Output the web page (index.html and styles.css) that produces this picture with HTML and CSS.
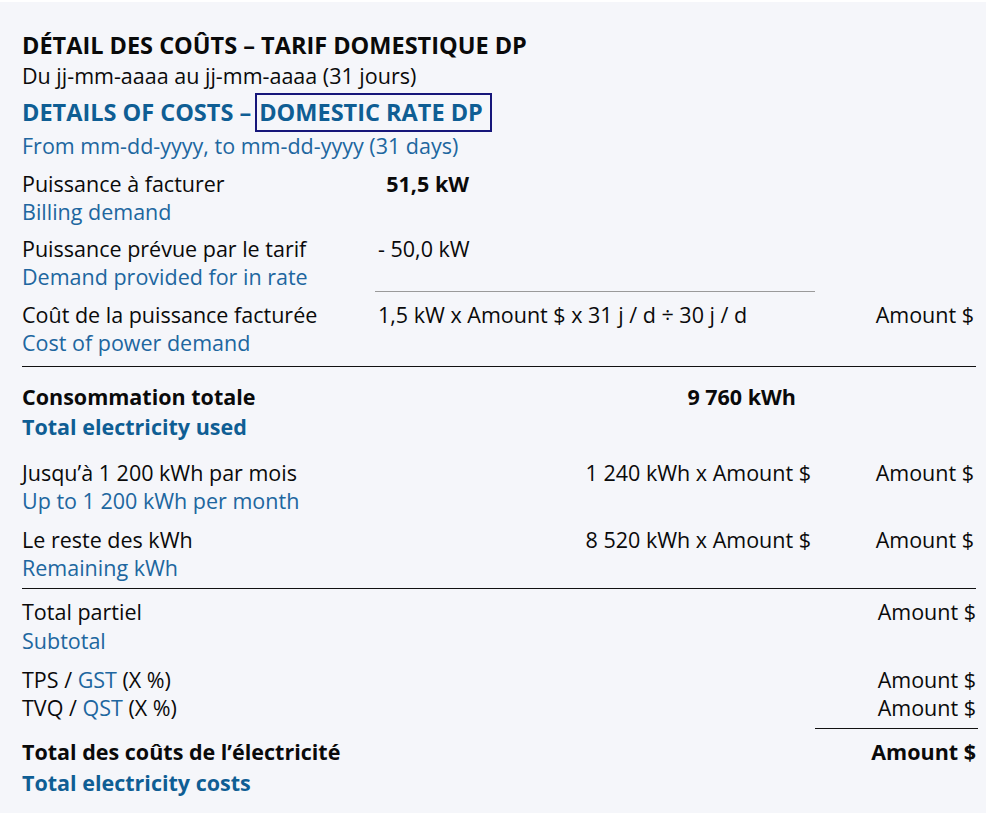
FILE: index.html
```html
<!DOCTYPE html>
<html lang="fr">
<head>
<meta charset="utf-8">
<title>Détail des coûts</title>
<link rel="stylesheet" href="styles.css">
</head>
<body>
<div class="page">
  <header class="head">
    <h1 class="title">DÉTAIL DES COÛTS – TARIF DOMESTIQUE DP</h1>
    <p class="sub">Du jj-mm-aaaa au jj-mm-aaaa (31 jours)</p>
    <h2 class="title-en">DETAILS OF COSTS –<span class="boxed">DOMESTIC RATE DP</span></h2>
    <p class="sub en">From mm-dd-yyyy, to mm-dd-yyyy (31 days)</p>
  </header>

  <section class="block power">
    <div class="row r1">
      <div class="label"><div>Puissance à facturer</div><div class="en">Billing demand</div></div>
      <div class="mid"><span class="qty bold">51,5 kW</span></div>
      <div class="amt"></div>
    </div>
    <div class="row r2">
      <div class="label"><div>Puissance prévue par le tarif</div><div class="en">Demand provided for in rate</div></div>
      <div class="mid rule"><span class="qty">- 50,0 kW</span></div>
      <div class="amt"></div>
    </div>
    <div class="row r3">
      <div class="label"><div>Coût de la puissance facturée</div><div class="en">Cost of power demand</div></div>
      <div class="mid"><span class="formula">1,5 kW x Amount $ x 31 j / d ÷ 30 j / d</span></div>
      <div class="amt">Amount $</div>
    </div>
  </section>

  <section class="block energy">
    <div class="row r4">
      <div class="label bold"><div>Consommation totale</div><div class="en">Total electricity used</div></div>
      <div class="mid right"><span class="bold total-kwh">9 760 kWh</span></div>
      <div class="amt"></div>
    </div>
    <div class="row r5">
      <div class="label"><div>Jusqu’à 1 200 kWh par mois</div><div class="en">Up to 1 200 kWh per month</div></div>
      <div class="mid right"><span class="calc">1 240 kWh x Amount $</span></div>
      <div class="amt">Amount $</div>
    </div>
    <div class="row r6">
      <div class="label"><div>Le reste des kWh</div><div class="en">Remaining kWh</div></div>
      <div class="mid right"><span class="calc">8 520 kWh x Amount $</span></div>
      <div class="amt">Amount $</div>
    </div>
  </section>

  <section class="block totals">
    <div class="row r7">
      <div class="label"><div>Total partiel</div><div class="en">Subtotal</div></div>
      <div class="mid"></div>
      <div class="amt amt2">Amount $</div>
    </div>
    <div class="row r8">
      <div class="label"><div>TPS / <span class="en">GST</span> (X %)</div><div>TVQ / <span class="en">QST</span> (X %)</div></div>
      <div class="mid"></div>
      <div class="amt amt2 taxes"><div>Amount $</div><div>Amount $</div></div>
    </div>
    <div class="row r9">
      <div class="label bold"><div>Total des coûts de l’électricité</div><div class="en">Total electricity costs</div></div>
      <div class="mid"></div>
      <div class="amt amt2 bold grand">Amount $</div>
    </div>
  </section>
</div>
</body>
</html>
```

FILE: styles.css
```css
* { box-sizing: border-box; }
html, body { margin: 0; padding: 0; background: #ffffff; }
body {
  font-family: "Open Sans", "Liberation Sans", sans-serif;
  color: #0a0a0a;
}
.page {
  margin-top: 2px;
  width: 986px;
  height: 811px;
  background: #f5f6fa;
  padding: 29px 10px 0 22px;
  font-size: 21.5px;
}
.head { margin-bottom: 10px; }
.title {
  margin: 0;
  font-size: 23.5px;
  font-weight: 700;
  line-height: 28px;
}
.sub {
  margin: 2px 0 0;
  line-height: 30px;
}
.title-en {
  margin: 2px 0 0;
  font-size: 23.5px;
  font-weight: 700;
  line-height: 39px;
  color: #0f5e94;
}
.boxed {
  display: inline-block;
  vertical-align: top;
  margin-left: 4px;
  border: 2px solid #16167a;
  padding: 0 7px 0 2px;
  line-height: 35px;
}
.sub.en { margin: 0; line-height: 28px; }
.en { color: #20669f; }
.bold { font-weight: 700; }
.label.bold .en { color: #0f5e94; }

.row {
  display: grid;
  grid-template-columns: 353px 440px 163px;
  line-height: 28px;
}
.label { white-space: nowrap; }
.mid { padding-left: 3px; white-space: nowrap; }
.mid.right { text-align: right; padding-right: 4px; }
.amt { text-align: right; padding-right: 4px; white-space: nowrap; }
.amt2 { padding-right: 2px; }

.qty { display: inline-block; width: 91px; text-align: right; }
.r2 { margin-top: 9px; }
.mid.rule { border-bottom: 1px solid #9a9a9a; height: 57px; }
.r3 { margin-top: 9px; }
.power { border-bottom: 1px solid #111; padding-bottom: 9px; }

.energy { padding-top: 15px; border-bottom: 1px solid #111; padding-bottom: 6px; }
.r4 { line-height: 30px; }
.r4 .total-kwh { margin-right: 15px; }
.r5 { margin-top: 17px; }
.r6 { margin-top: 11px; }

.totals { padding-top: 9px; }
.r7 .en { margin-top: 1px; }
.r8 { margin-top: 11px; }
.taxes { border-bottom: 1px solid #111; height: 63px; }
.r9 { margin-top: 7px; line-height: 31px; }
```
